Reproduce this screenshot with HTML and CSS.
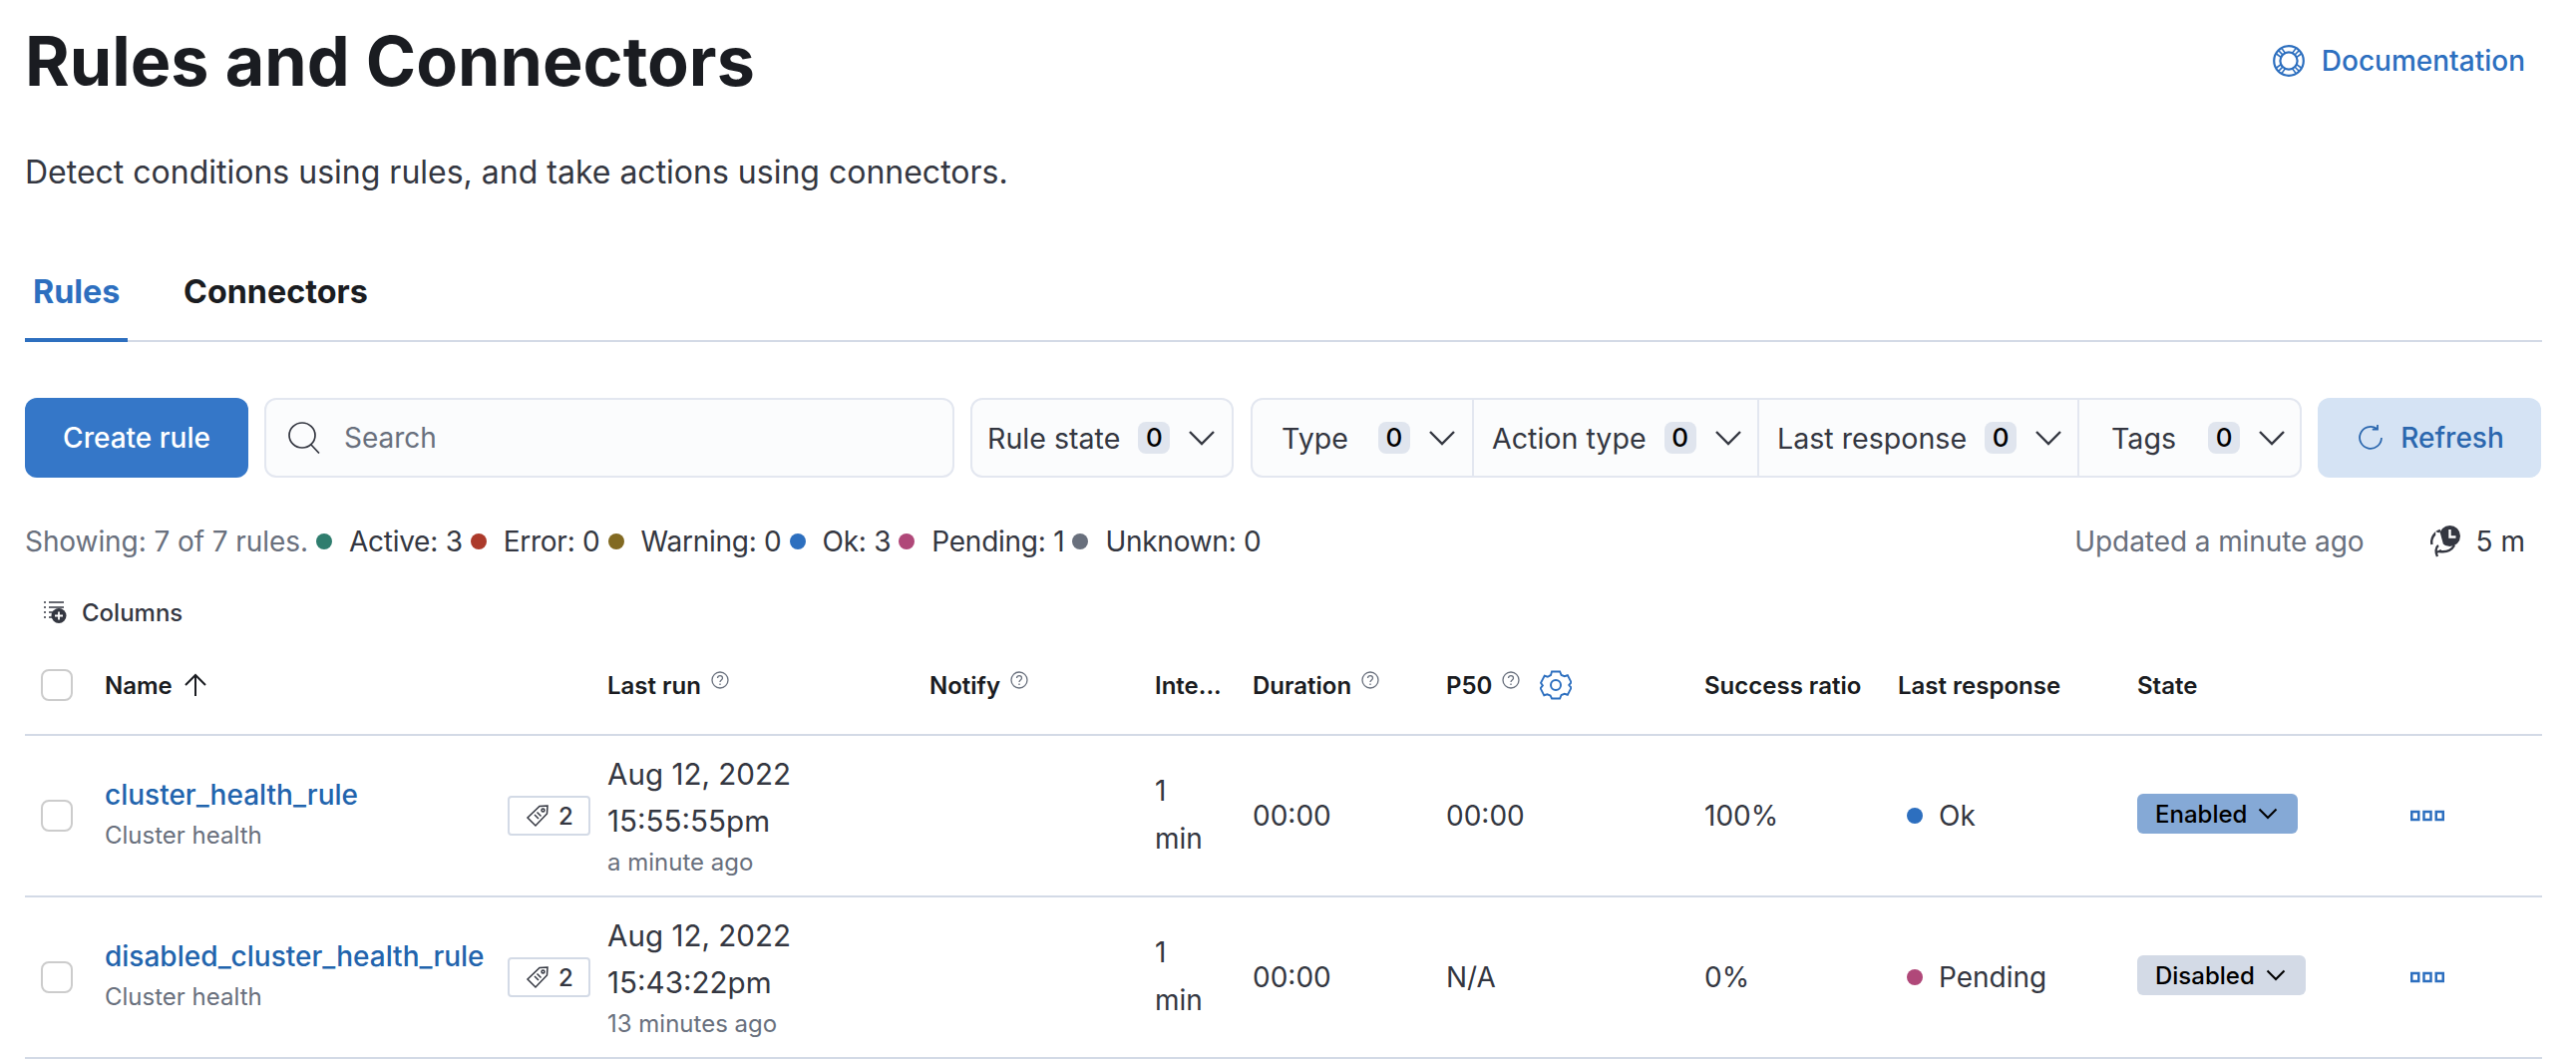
FILE: index.html
```html
<!DOCTYPE html>
<html lang="en">
<head>
<meta charset="utf-8">
<title>Rules and Connectors</title>
<link rel="stylesheet" href="styles.css">
</head>
<body>
<main class="page">
  <header class="page-header">
    <h1 class="title">Rules and Connectors</h1>
    <a class="doc-link">
      <svg class="doc-icon" viewBox="0 0 32 32" fill="none" stroke="currentColor" stroke-width="2.2"><circle cx="16" cy="16" r="14.8"/><circle cx="16" cy="16" r="8.6"/><path d="M5.5 5.5l4.5 4.5M26.5 5.5L22 10M5.5 26.5l4.5-4.5M26.5 26.5L22 22M9 3.6l3.8 5.2M23 3.6l-3.8 5.2M3.6 9l5.2 3.8M28.4 9l-5.2 3.8M3.6 23l5.2-3.8M28.4 23l-5.2-3.8M9 28.4l3.8-5.2M23 28.4l-3.8-5.2" stroke-width="1.6"/></svg>
      <span>Documentation</span>
    </a>
  </header>
  <p class="subtitle">Detect conditions using rules, and take actions using connectors.</p>

  <nav class="tabs">
    <a class="tab tab-active">Rules</a>
    <a class="tab">Connectors</a>
  </nav>

  <section class="toolbar">
    <button class="btn-primary">Create rule</button>
    <div class="search">
      <svg class="search-icon" viewBox="0 0 32 32" fill="none" stroke="#343741" stroke-width="1.7"><path d="M14 1C7 1 1 6.500 1 13.500S7 26 14 26 27 20.500 27 13.500 21 1 14 1zM23 23l8 8.500"/></svg>
      <span>Search</span>
    </div>
    <div class="filter-group filter-single">
      <div class="filter f-rule"><span class="f-label">Rule state</span><span class="count">0</span><svg class="chev" viewBox="0 0 28 16" fill="none" stroke="#343741" stroke-width="2.4"><path d="M2 2l12 12L26 2"/></svg></div>
    </div>
    <div class="filter-group filter-many">
      <div class="filter f-type"><span class="f-label">Type</span><span class="count">0</span><svg class="chev" viewBox="0 0 28 16" fill="none" stroke="#343741" stroke-width="2.4"><path d="M2 2l12 12L26 2"/></svg></div>
      <div class="filter f-action"><span class="f-label">Action type</span><span class="count">0</span><svg class="chev" viewBox="0 0 28 16" fill="none" stroke="#343741" stroke-width="2.4"><path d="M2 2l12 12L26 2"/></svg></div>
      <div class="filter f-resp"><span class="f-label">Last response</span><span class="count">0</span><svg class="chev" viewBox="0 0 28 16" fill="none" stroke="#343741" stroke-width="2.4"><path d="M2 2l12 12L26 2"/></svg></div>
      <div class="filter f-tags"><span class="f-label">Tags</span><span class="count">0</span><svg class="chev" viewBox="0 0 28 16" fill="none" stroke="#343741" stroke-width="2.4"><path d="M2 2l12 12L26 2"/></svg></div>
    </div>
    <button class="btn-refresh">
      <svg class="refresh-icon" viewBox="0 0 32 32" fill="none" stroke="currentColor" stroke-width="2"><path d="M23 5.500A12.500 12.500 0 1 0 28.500 16M24 1v5.500h-6"/></svg>
      <span>Refresh</span>
    </button>
  </section>

  <section class="status">
    <div class="status-left">
      <span class="muted">Showing: 7 of 7 rules.</span>
      <span class="stat"><i class="dot dot-green"></i>Active: 3</span>
      <span class="stat"><i class="dot dot-red"></i>Error: 0</span>
      <span class="stat"><i class="dot dot-yellow"></i>Warning: 0</span>
      <span class="stat"><i class="dot dot-blue"></i>Ok: 3</span>
      <span class="stat"><i class="dot dot-pink"></i>Pending: 1</span>
      <span class="stat"><i class="dot dot-gray"></i>Unknown: 0</span>
    </div>
    <div class="status-right">
      <span class="muted">Updated a minute ago</span>
      <span class="interval">
        <svg class="interval-icon" viewBox="0 0 30 32"><path d="M10 5C4 7 0 13 1.500 19" fill="none" stroke="#343741" stroke-width="2.400"/><path d="M24 20c-3 5-9 7-15 6" fill="none" stroke="#343741" stroke-width="2.400"/><path d="M8 20c-3 2-3 7-1 11M6 27l5-2" fill="none" stroke="#343741" stroke-width="2.400"/><circle cx="19.500" cy="10.500" r="10.500" fill="#343741"/><path d="M5 6a14 14 0 0 0 8 13L10 8z" fill="#fff"/><path d="M19.500 4v7.500h6" fill="none" stroke="#fff" stroke-width="2.400"/></svg>
        5 m
      </span>
    </div>
  </section>

  <div class="columns-btn">
    <svg class="columns-icon" viewBox="0 0 24 24"><path d="M0 2h2M0 7h2M0 12h2M0 17h2M5 2h15M5 7h15M5 12h7M5 17h5" stroke="#343741" stroke-width="1.600" fill="none"/><circle cx="15" cy="15.500" r="7.500" fill="#343741"/><path d="M15 11.500v8M11 15.500h8" stroke="#fff" stroke-width="1.800"/></svg>
    <span>Columns</span>
  </div>

  <section class="table">
    <div class="row row-head">
      <div class="cell"><span class="checkbox"></span></div>
      <div class="cell">Name <svg class="sort" viewBox="0 0 24 24" fill="none" stroke="#1a1c21" stroke-width="2"><path d="M12 23V2M2 12L12 2l10 10"/></svg></div>
      <div class="cell">Last run<svg class="help" viewBox="0 0 18 18" fill="none" stroke="#69707d" stroke-width="1.300"><circle cx="9" cy="9" r="8"/><path d="M6.500 7c0-3.300 5-3.300 5 0 0 2-2.500 2-2.500 4M9 12.500v1.500"/></svg></div>
      <div class="cell">Notify<svg class="help" viewBox="0 0 18 18" fill="none" stroke="#69707d" stroke-width="1.300"><circle cx="9" cy="9" r="8"/><path d="M6.500 7c0-3.300 5-3.300 5 0 0 2-2.500 2-2.500 4M9 12.500v1.500"/></svg></div>
      <div class="cell">Inte...</div>
      <div class="cell">Duration<svg class="help" viewBox="0 0 18 18" fill="none" stroke="#69707d" stroke-width="1.300"><circle cx="9" cy="9" r="8"/><path d="M6.500 7c0-3.300 5-3.300 5 0 0 2-2.500 2-2.500 4M9 12.500v1.500"/></svg></div>
      <div class="cell">P50<svg class="help" viewBox="0 0 18 18" fill="none" stroke="#69707d" stroke-width="1.300"><circle cx="9" cy="9" r="8"/><path d="M6.500 7c0-3.300 5-3.300 5 0 0 2-2.500 2-2.500 4M9 12.500v1.500"/></svg><svg class="gear" viewBox="0 0 32 32" fill="none" stroke="#2d6fbf" stroke-width="2"><path d="M11.500 2.500h9l1.500 3.500 3.500 1.300 3.500-1 4 7-2.500 2.700 2.500 2.700-4 7-3.500-1-3.500 1.300-1.500 3.500h-9L10 26.500l-3.500-1.300-3.500 1-4-7 2.500-2.700L-.5 13.800l4-7 3.500 1L10.500 6z" transform="translate(1.500 0) scale(.91 1)"/><circle cx="16" cy="16" r="5"/></svg></div>
      <div class="cell">Success ratio</div>
      <div class="cell">Last response</div>
      <div class="cell">State</div>
      <div class="cell"></div>
    </div>

    <div class="row row-body">
      <div class="cell"><span class="checkbox"></span></div>
      <div class="cell name-cell">
        <div class="name-text"><a class="rule-link">cluster_health_rule</a><div class="rule-type">Cluster health</div></div>
        <span class="tag-badge"><svg class="tag-icon" viewBox="0 0 24 24" fill="none" stroke="#343741" stroke-width="1.500"><path d="M14 2.500l8-.5-.5 8L10 22 2 14z"/><circle cx="17.500" cy="6.500" r="1.500"/><path d="M9 11l4 4M11.500 8.500l4 4"/></svg>2</span>
      </div>
      <div class="cell date-cell"><div>Aug 12, 2022</div><div>15:55:55pm</div><div class="ago">a minute ago</div></div>
      <div class="cell"></div>
      <div class="cell int-cell">1 min</div>
      <div class="cell">00:00</div>
      <div class="cell">00:00</div>
      <div class="cell">100%</div>
      <div class="cell"><i class="dot dot-blue resp-dot"></i>Ok</div>
      <div class="cell"><span class="state state-on">Enabled<svg class="chev-sm" viewBox="0 0 20 12" fill="none" stroke="#000" stroke-width="2"><path d="M1.500 1.500L10 10l8.500-8.500"/></svg></span></div>
      <div class="cell"><svg class="dots" viewBox="0 0 34 12" fill="none" stroke="#2d6fbf" stroke-width="2.500"><rect x="1.250" y="2" width="7" height="8"/><rect x="13.500" y="2" width="7" height="8"/><rect x="25.750" y="2" width="7" height="8"/></svg></div>
    </div>

    <div class="row row-body">
      <div class="cell"><span class="checkbox"></span></div>
      <div class="cell name-cell">
        <div class="name-text"><a class="rule-link">disabled_cluster_health_rule</a><div class="rule-type">Cluster health</div></div>
        <span class="tag-badge"><svg class="tag-icon" viewBox="0 0 24 24" fill="none" stroke="#343741" stroke-width="1.500"><path d="M14 2.500l8-.5-.5 8L10 22 2 14z"/><circle cx="17.500" cy="6.500" r="1.500"/><path d="M9 11l4 4M11.500 8.500l4 4"/></svg>2</span>
      </div>
      <div class="cell date-cell"><div>Aug 12, 2022</div><div>15:43:22pm</div><div class="ago">13 minutes ago</div></div>
      <div class="cell"></div>
      <div class="cell int-cell">1 min</div>
      <div class="cell">00:00</div>
      <div class="cell">N/A</div>
      <div class="cell">0%</div>
      <div class="cell"><i class="dot dot-pink resp-dot"></i>Pending</div>
      <div class="cell"><span class="state state-off">Disabled<svg class="chev-sm" viewBox="0 0 20 12" fill="none" stroke="#000" stroke-width="2"><path d="M1.500 1.500L10 10l8.500-8.500"/></svg></span></div>
      <div class="cell"><svg class="dots" viewBox="0 0 34 12" fill="none" stroke="#2d6fbf" stroke-width="2.500"><rect x="1.250" y="2" width="7" height="8"/><rect x="13.500" y="2" width="7" height="8"/><rect x="25.750" y="2" width="7" height="8"/></svg></div>
    </div>
  </section>
</main>
</body>
</html>
```

FILE: styles.css
```css
* { box-sizing: border-box; }
html, body { margin: 0; padding: 0; background: #fff; height: 1062px; overflow: hidden; }
body { font-family: Inter, "Liberation Sans", sans-serif; font-size: 28px; color: #343741; }
.page { padding: 0 34px 0 25px; }

.page-header { display: flex; justify-content: space-between; align-items: center; height: 122px; }
.title { margin: 0; font-size: 68.2px; font-weight: 700; line-height: 122px; color: #1a1c21; }
.doc-link { display: flex; align-items: center; gap: 17px; color: #2d6fbf; font-weight: 500; padding-right: 17px; }
.doc-icon { width: 32px; height: 32px; }
.subtitle { margin: 29px 0 0; font-size: 32px; line-height: 44px; color: #343741; }

.tabs { display: flex; gap: 48px; margin-top: 64px; height: 84px; border-bottom: 2px solid #d3dae6; }
.tab { height: 84px; padding: 8px 8px 0; font-size: 32.3px; font-weight: 700; line-height: 52px; color: #1a1c21; }
.tab-active { width: 103px; color: #2d6fbf; border-bottom: 4px solid #2d6fbf; }

.toolbar { display: flex; gap: 16px; margin-top: 56px; height: 80px; }
.btn-primary { width: 224px; height: 80px; border: 0; border-radius: 12px; background: #3577c8; color: #fff; font: 500 28px Inter, sans-serif; }
.search { width: 692px; height: 80px; display: flex; align-items: center; gap: 24px; padding-left: 22px; border: 2px solid #e3e7f0; border-radius: 12px; background: #fbfcfd; color: #69707d; }
.search-icon { width: 32px; height: 32px; }
.filter-group { display: flex; height: 80px; border: 2px solid #e3e7f0; border-radius: 12px; background: #fbfcfd; }
.filter-single { width: 264px; margin-right: 1px; }
.filter-many { width: 1054px; }
.filter { display: flex; align-items: center; height: 100%; padding-left: 18px; border-right: 2px solid #e3e7f0; }
.filter:last-child { border-right: 0; }
.f-rule { width: 100%; padding-left: 15px; }
.f-type { width: 222px; padding-left: 29px; }
.f-action { width: 286px; }
.f-resp { width: 321px; }
.f-tags { flex: 1; padding-left: 32px; }
.f-label { font-size: 28.6px; color: #343741; }
.count { display: block; min-width: 32px; height: 32px; margin-left: 18px; border-radius: 8px; background: #e0e5ee; color: #000; font-size: 26px; font-weight: 500; line-height: 32px; text-align: center; }
.f-type .count { margin-left: 30px; }
.f-tags .count { margin-left: 32px; }
.chev { width: 28px; height: 16px; margin-left: 18px; flex: none; }
.btn-refresh { width: 224px; height: 80px; display: flex; align-items: center; justify-content: center; gap: 16px; padding-left: 8px; border: 0; border-radius: 12px; background: #d5e3f4; color: #2b67ae; font: 500 28px Inter, sans-serif; }
.refresh-icon { width: 28px; height: 28px; }

.status { display: flex; justify-content: space-between; align-items: center; margin-top: 44px; height: 40px; }
.status-left { display: flex; align-items: center; }
.muted { color: #69707d; letter-spacing: -.08px; }
.stat { display: flex; align-items: center; margin-left: 8px; white-space: nowrap; letter-spacing: -.25px; }
.dot { display: inline-block; width: 16px; height: 16px; border-radius: 50%; margin-right: 17px; flex: none; }
.dot-green { background: #2f7d6e; }
.dot-red { background: #ac3a2b; }
.dot-yellow { background: #826a22; }
.dot-blue { background: #2d6fbf; }
.dot-pink { background: #b04879; }
.dot-gray { background: #69707d; }
.status-right { display: flex; align-items: center; gap: 66px; padding-right: 17px; }
.interval { display: flex; align-items: center; gap: 16px; }
.interval-icon { width: 30px; height: 32px; }

.columns-btn { display: flex; align-items: center; gap: 14px; margin-top: 35px; height: 32px; padding-left: 19px; font-size: 24px; font-weight: 500; }
.columns-icon { width: 24px; height: 24px; }

.table { margin-top: 8px; }
.row { display: grid; grid-template-columns: 80px 504px 323px 226px 98px 194px 259px 194px 240px 272px 134px; align-items: center; border-bottom: 2px solid #d3dae6; }
.row-head { height: 100px; font-size: 24px; font-weight: 600; color: #1a1c21; }
.row-body { height: 162px; }
.cell { display: flex; align-items: center; min-width: 0; }
.checkbox { display: block; width: 32px; height: 32px; margin-left: 16px; border: 2px solid #ccc; border-radius: 8px; background: #fff; }
.sort { width: 24px; height: 24px; margin-left: 11px; }
.help { width: 18px; height: 18px; margin: -10px 0 0 10px; }
.gear { width: 32px; height: 32px; margin-left: 20px; }
.name-cell { justify-content: space-between; padding-right: 17px; }
.rule-link { color: #2264ad; font-weight: 500; line-height: 40px; white-space: nowrap; }
.rule-type { color: #69707d; font-size: 24px; line-height: 36px; margin-top: 3px; }
.name-text { margin-top: -4px; }
.tag-badge { display: flex; align-items: center; gap: 9px; width: 83px; height: 40px; padding-left: 16px; border: 2px solid #d3dae6; border-radius: 4px; font-size: 24px; font-weight: 500; }
.tag-icon { width: 24px; height: 24px; }
.date-cell { display: block; font-size: 29.6px; line-height: 47px; }
.date-cell .ago { font-size: 24px; line-height: 36px; color: #69707d; }
.int-cell { display: block; width: 60px; line-height: 48px; margin-top: -2px; }
.resp-dot { margin: 0 16px 0 9px; }
.state { display: inline-flex; align-items: center; gap: 11px; height: 40px; padding: 0 20px 0 18px; margin-top: -4px; border-radius: 6px; color: #000; font-size: 24px; font-weight: 500; }
.state-on { background: #85a9d6; }
.state-off { background: #d3dae6; }
.chev-sm { width: 20px; height: 12px; }
.dots { width: 34px; height: 12px; margin-left: 2px; }
```
